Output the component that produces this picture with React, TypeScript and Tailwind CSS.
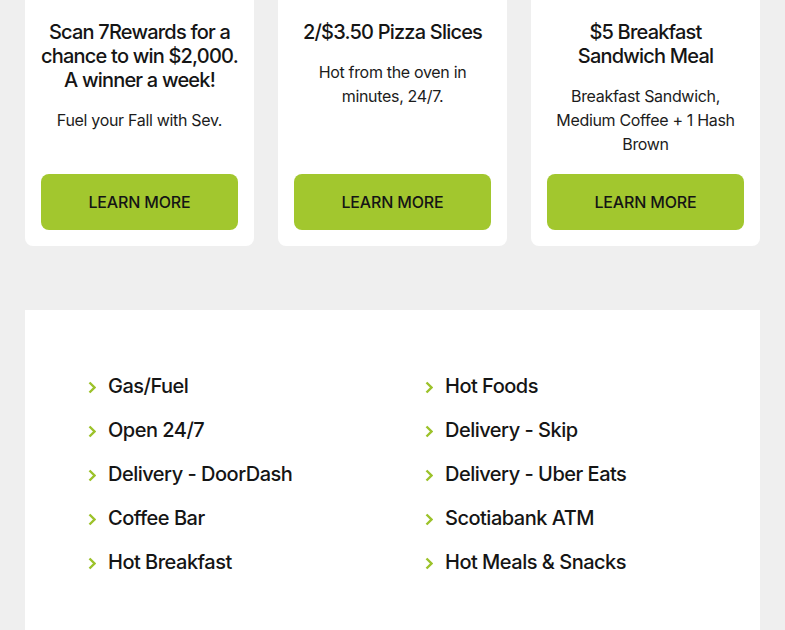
interface Promo {
  title: string;
  body: string;
}

const promos: Promo[] = [
  { title: "Scan 7Rewards for a chance to win $2,000. A winner a week!", body: "Fuel your Fall with Sev." },
  { title: "2/$3.50 Pizza Slices", body: "Hot from the oven in minutes, 24/7." },
  { title: "$5 Breakfast Sandwich Meal", body: "Breakfast Sandwich, Medium Coffee + 1 Hash Brown" },
];

const leftList = ["Gas/Fuel", "Open 24/7", "Delivery - DoorDash", "Coffee Bar", "Hot Breakfast"];
const rightList = ["Hot Foods", "Delivery - Skip", "Delivery - Uber Eats", "Scotiabank ATM", "Hot Meals & Snacks"];

function PromoCard({ promo }: { promo: Promo }) {
  return (
    <div className="bg-white rounded-lg px-4 pt-9 pb-4 flex flex-col text-center">
      <h3 className="-mx-0.5 text-[20px] leading-6 font-medium text-[#151515] tracking-[-0.04em]">{promo.title}</h3>
      <p className="mt-4 text-[16px] leading-6 text-[#1c1c1c] px-2 tracking-[-0.02em]">{promo.body}</p>
      <button className="mt-auto bg-[#a2c72e] rounded-lg h-14 text-[16px] font-medium text-[#151515] uppercase tracking-[-0.01em]">
        Learn More
      </button>
    </div>
  );
}

function ServiceItem({ label }: { label: string }) {
  return (
    <li className="flex items-center gap-3 h-7">
      <svg width="8" height="13" viewBox="0 0 8 13" className="mt-[3px] shrink-0">
        <polyline points="1.5,1.5 6.5,6.5 1.5,11.5" fill="none" stroke="#9cc22a" strokeWidth="2.4" />
      </svg>
      <span className="text-[20px] leading-7 font-medium text-[#151515] tracking-[-0.025em]">{label}</span>
    </li>
  );
}

export default function App() {
  return (
    <div className="min-h-screen bg-[#efefef] px-[25px] pb-10 overflow-hidden" style={{ fontFamily: "Inter, 'Liberation Sans', sans-serif" }}>
      <div className="-mt-4 grid grid-cols-3 gap-6 h-[262px]">
        {promos.map((p) => (
          <PromoCard key={p.title} promo={p} />
        ))}
      </div>
      <div className="mt-16 bg-white pt-[62px] pb-16 pl-[63px] pr-8 grid grid-cols-[337px_1fr]">
        <ul className="flex flex-col gap-4">
          {leftList.map((l) => (
            <ServiceItem key={l} label={l} />
          ))}
        </ul>
        <ul className="flex flex-col gap-4">
          {rightList.map((l) => (
            <ServiceItem key={l} label={l} />
          ))}
        </ul>
      </div>
    </div>
  );
}
